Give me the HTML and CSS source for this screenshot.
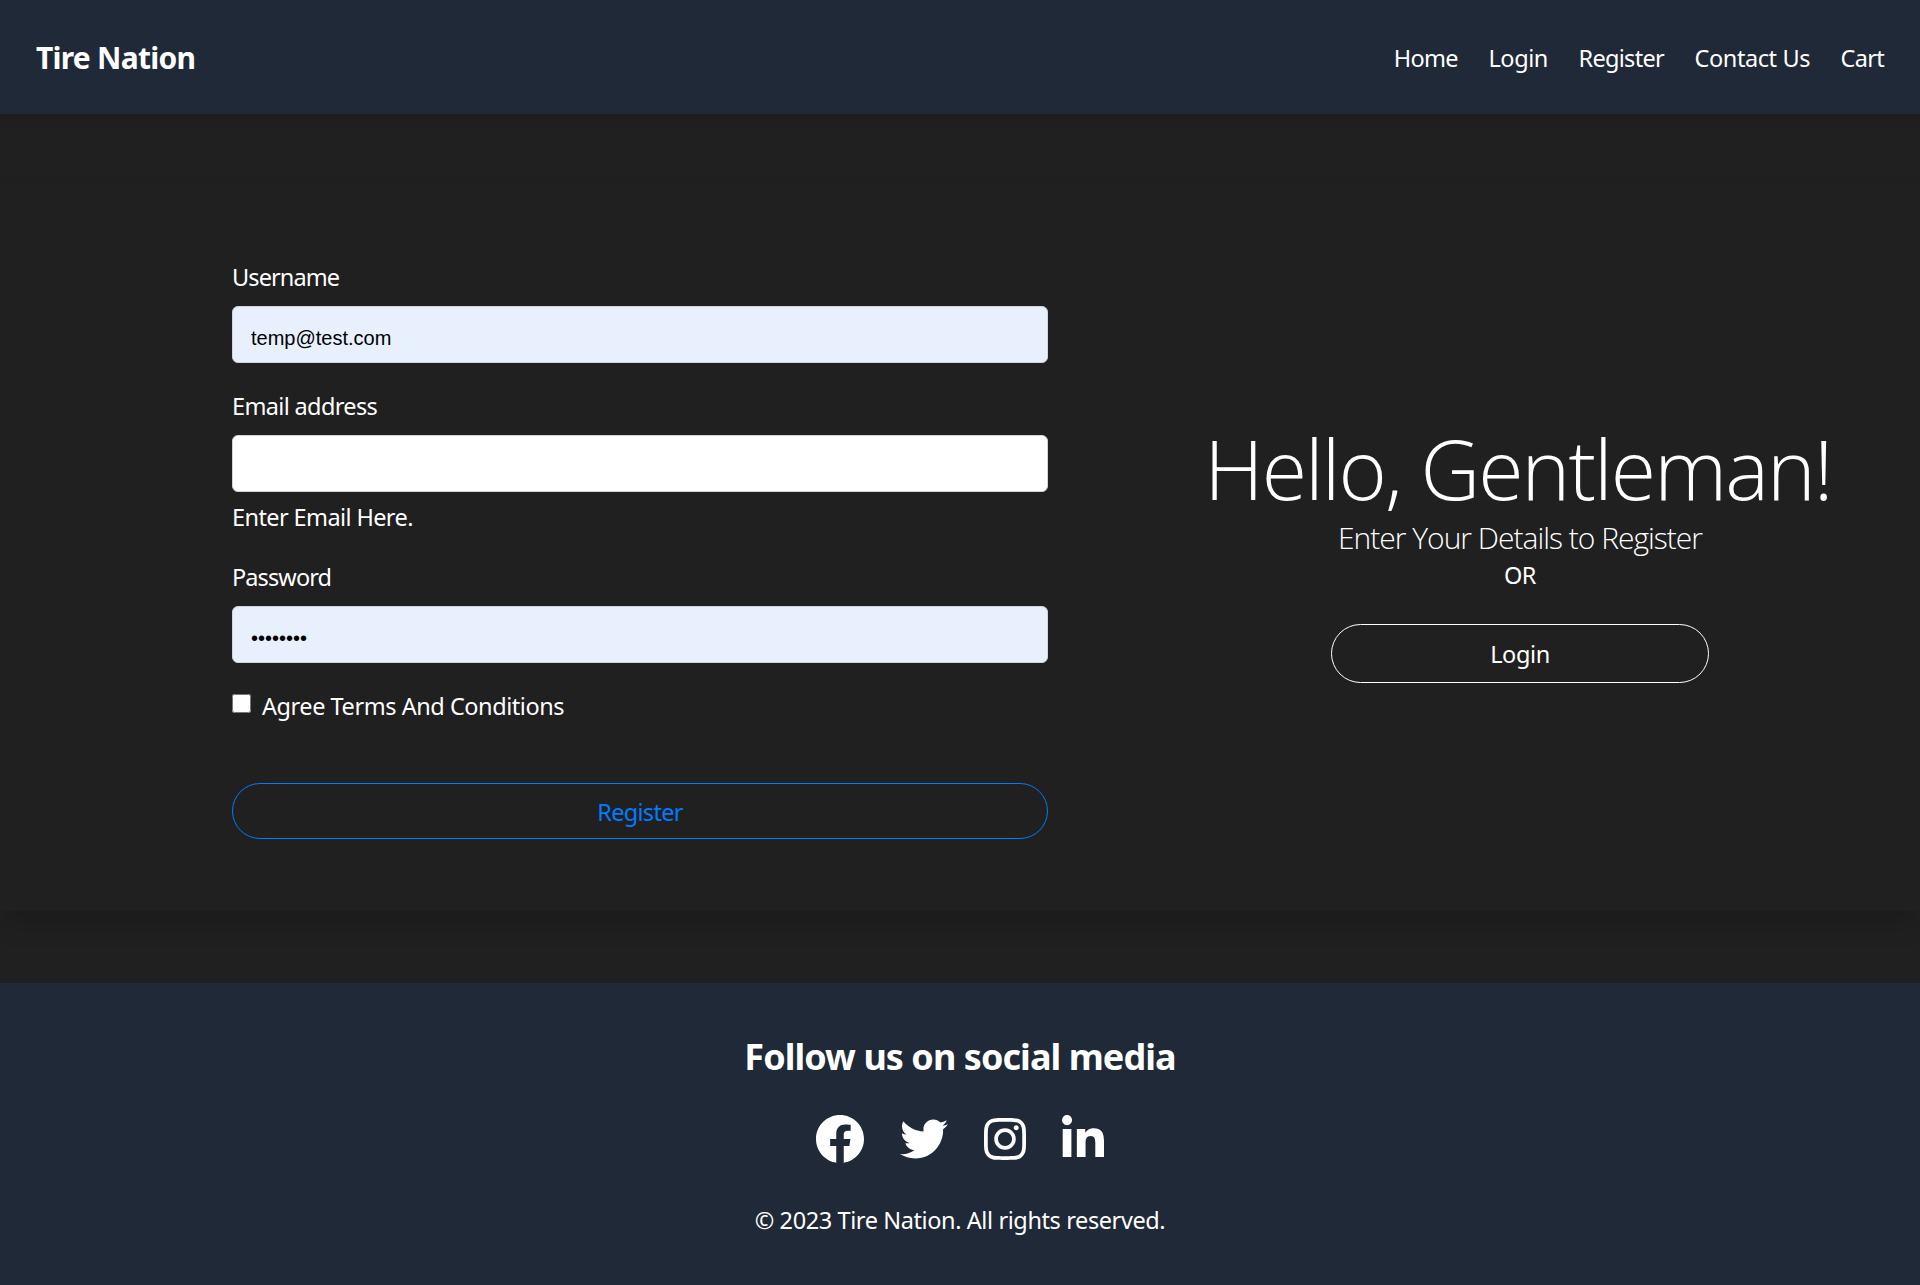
FILE: index.html
```html
<!DOCTYPE html>
<html lang="en">
<head>
<meta charset="utf-8">
<title>Tire Nation</title>
<link rel="stylesheet" href="styles.css">
</head>
<body>
<header class="navbar">
  <a class="brand">Tire Nation</a>
  <nav class="links">
    <a class="tight">Home</a>
    <a class="loose">Login</a>
    <a class="tight">Register</a>
    <a class="loose">Contact Us</a>
    <a class="tight">Cart</a>
  </nav>
</header>
<main class="panel">
  <form class="form">
    <div class="field">
      <label class="label snug" for="username">Username</label>
      <input class="input filled" id="username" type="text" value="temp@test.com">
    </div>
    <div class="field">
      <label class="label" for="email">Email address</label>
      <input class="input" id="email" type="email">
      <div class="help">Enter Email Here.</div>
    </div>
    <div class="field">
      <label class="label snug" for="password">Password</label>
      <input class="input filled" id="password" type="password" value="password">
    </div>
    <label class="agree"><input class="check" type="checkbox"><span>Agree Terms And Conditions</span></label>
    <button class="btn register" type="button">Register</button>
  </form>
  <section class="welcome">
    <h1 class="hello">Hello, Gentleman!</h1>
    <p class="sub">Enter Your Details to Register</p>
    <p class="or">OR</p>
    <button class="btn login" type="button">Login</button>
  </section>
</main>
<footer class="footer">
  <h2 class="follow">Follow us on social media</h2>
  <div class="social">
    <svg class="icon" viewBox="8 8 496 496"><path d="M504 256C504 119 393 8 256 8S8 119 8 256c0 123.78 90.69 226.38 209.25 245V327.69h-63V256h63v-54.64c0-62.15 37-96.48 93.67-96.48 27.14 0 55.52 4.84 55.52 4.84v61h-31.28c-30.8 0-40.41 19.12-40.41 38.73V256h68.78l-11 71.69h-57.78V501C413.31 482.38 504 379.78 504 256z"/></svg>
    <svg class="icon" viewBox="0 0 512 512"><path d="M459.37 151.716c.325 4.548.325 9.097.325 13.645 0 138.72-105.583 298.558-298.558 298.558-59.452 0-114.68-17.219-161.137-47.106 8.447.974 16.568 1.299 25.34 1.299 49.055 0 94.213-16.568 130.274-44.832-46.132-.975-84.792-31.188-98.112-72.772 6.498.974 12.995 1.624 19.818 1.624 9.421 0 18.843-1.3 27.614-3.573-48.081-9.747-84.143-51.98-84.143-102.985v-1.299c13.969 7.797 30.214 12.67 47.431 13.319-28.264-18.843-46.781-51.005-46.781-87.391 0-19.492 5.197-37.36 14.294-52.954 51.655 63.675 129.3 105.258 216.365 109.807-1.624-7.797-2.599-15.918-2.599-24.04 0-57.828 46.782-104.934 104.934-104.934 30.213 0 57.502 12.67 76.67 33.137 23.715-4.548 46.456-13.32 66.599-25.34-7.798 24.366-24.366 44.833-46.132 57.827 21.117-2.273 41.584-8.122 60.426-16.243-14.292 20.791-32.161 39.308-52.628 54.253z"/></svg>
    <svg class="icon narrow" viewBox="0 0 448 512"><path d="M224.1 141c-63.6 0-114.9 51.3-114.9 114.9s51.3 114.9 114.9 114.9S339 319.5 339 255.9 287.7 141 224.1 141zm0 189.6c-41.1 0-74.7-33.5-74.7-74.7s33.5-74.7 74.7-74.7 74.7 33.5 74.7 74.7-33.6 74.7-74.7 74.7zm146.4-194.3c0 14.9-12 26.8-26.8 26.8-14.9 0-26.8-12-26.8-26.8s12-26.8 26.8-26.8 26.8 12 26.8 26.8zm76.1 27.2c-1.7-35.9-9.9-67.7-36.2-93.9-26.2-26.2-58-34.4-93.9-36.2-37-2.1-147.9-2.1-184.9 0-35.8 1.7-67.6 9.9-93.9 36.1s-34.4 58-36.2 93.9c-2.1 37-2.1 147.9 0 184.9 1.7 35.9 9.9 67.7 36.2 93.9s58 34.4 93.9 36.2c37 2.1 147.9 2.1 184.9 0 35.9-1.7 67.7-9.9 93.9-36.2 26.2-26.2 34.4-58 36.2-93.9 2.1-37 2.1-147.8 0-184.8zM398.8 388c-7.8 19.6-22.9 34.7-42.6 42.6-29.5 11.7-99.5 9-132.1 9s-102.7 2.6-132.1-9c-19.6-7.8-34.7-22.9-42.6-42.6-11.7-29.5-9-99.5-9-132.1s-2.6-102.7 9-132.1c7.8-19.6 22.9-34.7 42.6-42.6 29.5-11.7 99.5-9 132.1-9s102.7-2.6 132.1 9c19.6 7.8 34.7 22.9 42.6 42.6 11.7 29.5 9 99.5 9 132.1s2.7 102.7-9 132.1z"/></svg>
    <svg class="icon narrow" viewBox="0 0 448 512"><path d="M100.28 448H7.4V148.9h92.88zM53.79 108.1C24.09 108.1 0 83.5 0 53.8a53.79 53.79 0 0 1 107.58 0c0 29.7-24.1 54.3-53.79 54.3zM447.9 448h-92.68V302.4c0-34.7-.7-79.2-48.29-79.2-48.29 0-55.69 37.7-55.69 76.7V448h-92.78V148.9h89.08v40.8h1.3c12.4-23.5 42.69-48.3 87.88-48.3 94 0 111.28 61.9 111.28 142.3V448z"/></svg>
  </div>
  <p class="copy">© 2023 Tire Nation. All rights reserved.</p>
</footer>
</body>
</html>
```
FILE: styles.css
```css
* { box-sizing: border-box; margin: 0; padding: 0; }

body {
  min-height: 1285px;
  display: flex;
  flex-direction: column;
  background: #202020;
  color: #fff;
  font-family: "Noto Sans", "Open Sans", sans-serif;
  font-size: 23.5px;
  line-height: 38px;
  letter-spacing: -0.6px;
}

/* Header */
.navbar {
  height: 114px;
  padding: 2px 36px 0;
  display: flex;
  align-items: center;
  justify-content: space-between;
  background: #1f2937;
  box-shadow: 0 6px 9px rgba(0, 0, 0, .1);
}
.brand { font-size: 30px; font-weight: 700; letter-spacing: -0.75px; }
.links { display: flex; gap: 30.5px; }
.loose { letter-spacing: -0.4px; }
.tight { letter-spacing: -0.7px; }

/* Register panel */
.panel {
  margin: 72px 0;
  padding: 72px 0;
  display: grid;
  grid-template-columns: 816px 944px;
  padding-left: 232px;
  box-shadow: 0 12px 24px rgba(0, 0, 0, .15);
  background: #202020;
}
.form { display: flex; flex-direction: column; }
.field { margin-bottom: 24px; display: flex; flex-direction: column; }
.label { height: 36px; margin-bottom: 12px; letter-spacing: -0.65px; }
.snug { letter-spacing: -0.9px; }
.input {
  height: 57px;
  padding: 7px 18px 0;
  border: 1px solid #ced4da;
  border-radius: 6px;
  background: #fff;
  color: #000;
  font-family: "Liberation Sans", Arial, sans-serif;
  font-size: 20px;
}
.filled { background: #e8f0fe; }
.help { height: 36px; margin-top: 6px; }
.agree {
  height: 36px;
  display: flex;
  align-items: flex-start;
  gap: 11px;
  letter-spacing: -0.45px;
}
.check { width: 19px; height: 19px; margin-top: 7px; }

.btn {
  background: transparent;
  border: 1px solid #fff;
  border-radius: 30px;
  color: #fff;
  font: inherit;
  letter-spacing: -0.4px;
}
.register {
  height: 56px;
  margin-top: 60px;
  padding-top: 2px;
  border-color: #007bff;
  color: #007bff;
  letter-spacing: -0.7px;
}

/* Welcome column */
.welcome {
  padding-top: 160px;
  display: flex;
  flex-direction: column;
  align-items: center;
}
.hello {
  padding-right: 4px;
  font-family: "Open Sans", sans-serif;
  font-weight: 300;
  font-size: 82.5px;
  line-height: 100px;
  letter-spacing: -1.9px;
}
.sub {
  margin-top: 2px;
  font-family: "Open Sans", sans-serif;
  font-weight: 300;
  font-size: 30px;
  line-height: 36px;
  letter-spacing: -1px;
}
.or { height: 36px; }
.login { width: 378px; height: 59px; margin-top: 32px; }

/* Footer */
.footer {
  flex: 1;
  padding-top: 52px;
  display: flex;
  flex-direction: column;
  align-items: center;
  background: #1f2937;
}
.follow { font-size: 36px; font-weight: 700; line-height: 43px; letter-spacing: -0.95px; }
.social { margin: 37px 0 38px; display: flex; gap: 36px; }
.icon { width: 48px; height: 48px; fill: #fff; }
.narrow { width: 42px; }
.copy { height: 36px; letter-spacing: -0.4px; }
```
